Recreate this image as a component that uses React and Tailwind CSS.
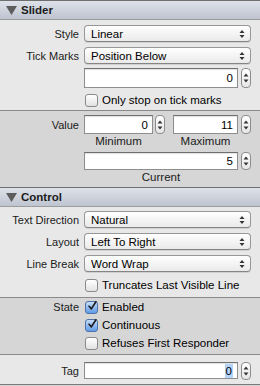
import React from 'react';

const font = { fontFamily: '"Liberation Sans", Arial, sans-serif' };

function Header({ title }) {
  return (
    <div className="flex h-[20px] shrink-0 items-center border-t border-b border-t-[#6e6e6e] border-b-[#9c9c9c] bg-gradient-to-b from-[#dde1e9] to-[#bec4d0] pl-[6px]">
      <svg width="11" height="9" viewBox="0 0 11 9">
        <path d="M0 0 L11 0 L5.5 9 Z" fill="#5c5c5c" />
      </svg>
      <span className="ml-[4px] text-[11.5px] font-bold text-[#1c1c1c]">{title}</span>
    </div>
  );
}

function Label({ children }) {
  return <div className="w-[84px] shrink-0 pr-[5px] text-right text-[11px] text-[#1a1a1a]">{children}</div>;
}

function Popup({ value }) {
  return (
    <div className="flex h-[17px] flex-1 items-center justify-between rounded-[4px] border border-[#979797] border-b-[#858585] bg-gradient-to-b from-white to-[#eaeaea] pl-[6px] pr-[5px] text-[11.5px] text-black shadow-[0_1px_0_rgba(0,0,0,0.1)]">
      <span>{value}</span>
      <svg width="6" height="10" viewBox="0 0 6 10">
        <path d="M3 1 L5.5 4 L0.5 4 Z" fill="#333" />
        <path d="M0.5 6 L5.5 6 L3 9 Z" fill="#333" />
      </svg>
    </div>
  );
}

function Stepper({ h = 'h-[19px]' }) {
  return (
    <div className={`flex w-[10px] shrink-0 flex-col items-center justify-center gap-[2px] rounded-[4px] border border-[#8c8c8c] bg-gradient-to-b from-white to-[#e6e6e6] ${h}`}>
      <svg width="6" height="4" viewBox="0 0 6 4"><path d="M3 0.5 L5.5 3.5 L0.5 3.5 Z" fill="#333" /></svg>
      <svg width="6" height="4" viewBox="0 0 6 4"><path d="M0.5 0.5 L5.5 0.5 L3 3.5 Z" fill="#333" /></svg>
    </div>
  );
}

function Field({ value, className = '', h = 'h-[19px]', selected }) {
  return (
    <div className={`flex items-center justify-end border border-[#8e8e8e] border-t-[#6f6f6f] bg-white pr-[4px] text-[11.5px] text-black shadow-[inset_0_1px_1px_rgba(0,0,0,0.12)] ${h} ${className}`}>
      <span className={selected ? 'bg-[#b4d3fa] px-[1px]' : ''}>{value}</span>
    </div>
  );
}

function Checkbox({ checked, label }) {
  return (
    <div className="flex items-center">
      <div
        className={`flex h-[13px] w-[13px] items-center justify-center rounded-[3px] border ${
          checked
            ? 'border-[#4f73a8] bg-gradient-to-b from-[#c6dcf7] to-[#5f9be6]'
            : 'border-[#8a8a8a] bg-gradient-to-b from-white to-[#e2e2e2]'
        }`}
      >
        {checked && (
          <svg width="12" height="13" viewBox="0 0 12 13" className="-mt-[4px] ml-[2px]">
            <path d="M1.5 7.5 L4.5 11 L10.5 1.5" stroke="#1c1c1c" strokeWidth="2.2" fill="none" strokeLinecap="round" strokeLinejoin="round" />
          </svg>
        )}
      </div>
      <span className="ml-[4px] text-[11.5px] text-black">{label}</span>
    </div>
  );
}

function Row({ label, children, className = '' }) {
  return (
    <div className={`flex shrink-0 items-center pr-[9px] ${className}`}>
      <Label>{label}</Label>
      <div className="flex flex-1 items-center">{children}</div>
    </div>
  );
}

export default function App() {
  return (
    <div className="flex h-[386px] w-[260px] flex-col overflow-hidden bg-[#e8e8e8] leading-[14px]" style={font}>
      <Header title="Slider" />

      <div className="flex h-[91px] shrink-0 flex-col border-b border-[#8a8a8a] bg-[#e8e8e8] pt-[5px]">
        <Row label="Style" className="h-[17px]"><Popup value="Linear" /></Row>
        <Row label="Tick Marks" className="mt-[5px] h-[17px]"><Popup value="Position Below" /></Row>
        <Row label="" className="mt-[4px] h-[20px]">
          <Field value="0" h="h-[20px]" className="flex-1" />
          <div className="ml-[3px]"><Stepper h="h-[20px]" /></div>
        </Row>
        <Row label="" className="mt-[5px] h-[14px]">
          <div className="ml-[1px]"><Checkbox label="Only stop on tick marks" /></div>
        </Row>
      </div>

      <div className="flex h-[76px] shrink-0 flex-col bg-[#d6d6d6] pt-[4px]">
        <Row label="Value" className="h-[19px]">
          <div className="flex flex-1 items-center">
            <Field value="0" className="w-[69px]" />
            <div className="ml-[2px]"><Stepper /></div>
            <Field value="11" className="ml-[8px] flex-1" />
            <div className="ml-[3px]"><Stepper /></div>
          </div>
        </Row>
        <div className="flex h-[13px] shrink-0 items-center pl-[84px] pr-[9px] text-[11.5px] text-[#1a1a1a]">
          <div className="w-[69px] text-center">Minimum</div>
          <div className="ml-[20px] flex-1 pr-[13px] text-center">Maximum</div>
        </div>
        <Row label="" className="mt-[5px] h-[18px]">
          <Field value="5" h="h-[18px]" className="flex-1" />
          <div className="ml-[3px]"><Stepper h="h-[18px]" /></div>
        </Row>
        <div className="flex h-[13px] shrink-0 items-center pl-[84px] pr-[22px] text-[11.5px] text-[#1a1a1a]">
          <div className="flex-1 text-center">Current</div>
        </div>
      </div>

      <Header title="Control" />

      <div className="flex h-[91px] shrink-0 flex-col border-b border-[#8a8a8a] bg-[#e8e8e8] pt-[4px]">
        <Row label="Text Direction" className="h-[17px]"><Popup value="Natural" /></Row>
        <Row label="Layout" className="mt-[5px] h-[17px]"><Popup value="Left To Right" /></Row>
        <Row label="Line Break" className="mt-[5px] h-[17px]"><Popup value="Word Wrap" /></Row>
        <Row label="" className="mt-[6px] h-[14px]">
          <div className="ml-[1px]"><Checkbox label="Truncates Last Visible Line" /></div>
        </Row>
      </div>

      <div className="flex h-[57px] shrink-0 flex-col border-b border-[#8a8a8a] bg-[#d6d6d6]">
        <Row label="State" className="h-[18px]">
          <div className="ml-[1px]"><Checkbox checked label="Enabled" /></div>
        </Row>
        <Row label="" className="h-[18px]">
          <div className="ml-[1px]"><Checkbox checked label="Continuous" /></div>
        </Row>
        <Row label="" className="h-[18px]">
          <div className="ml-[1px]"><Checkbox label="Refuses First Responder" /></div>
        </Row>
      </div>

      <div className="flex h-[30px] shrink-0 flex-col border-b border-[#7a7a7a] bg-[#e8e8e8] pt-[7px]">
        <Row label="Tag" className="h-[17px]">
          <Field value="0" selected h="h-[17px]" className="flex-1 border-[#6a95cf] shadow-[0_0_0_2px_#8db5ea]" />
          <div className="ml-[3px]"><Stepper h="h-[18px]" /></div>
        </Row>
      </div>
      <div className="flex-1 bg-[#d6d6d6]" />
    </div>
  );
}
